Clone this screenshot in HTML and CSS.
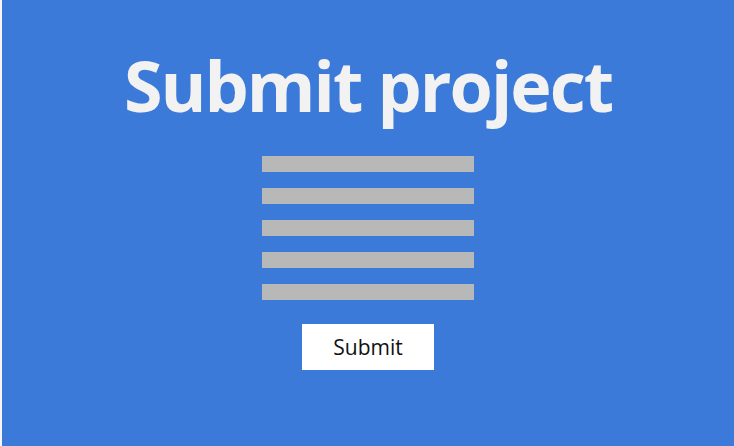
FILE: index.html
```html
<!DOCTYPE html>
<html>
<head>
<meta charset="utf-8">
<link rel="stylesheet" href="styles.css">
</head>
<body>
<main class="page">
  <h1 class="title">Submit project</h1>
  <div class="fields">
    <div class="field"></div>
    <div class="field"></div>
    <div class="field"></div>
    <div class="field"></div>
    <div class="field"></div>
  </div>
  <button class="submit" type="button">Submit</button>
</main>
</body>
</html>
```
FILE: styles.css
```css
html, body {
  margin: 0;
  padding: 0;
  background: #f4f6fb;
}
body {
  width: 734px;
  height: 446px;
  overflow: hidden;
}
.page {
  margin-left: 2px;
  height: 446px;
  background: #3c7ad9;
  display: flex;
  flex-direction: column;
  align-items: center;
  padding-top: 50px;
  box-sizing: border-box;
  font-family: "Open Sans", "Liberation Sans", sans-serif;
}
.title {
  margin: 0;
  font-size: 70px;
  line-height: 1;
  font-weight: 700;
  color: #f2f2f2;
  letter-spacing: -2px;
}
.fields {
  margin-top: 36px;
  display: flex;
  flex-direction: column;
  gap: 16px;
}
.field {
  width: 212px;
  height: 16px;
  background: #b8b8b8;
}
.submit {
  margin-top: 24px;
  width: 132px;
  height: 46px;
  border: none;
  background: #ffffff;
  color: #111;
  font-family: "Open Sans", "Liberation Sans", sans-serif;
  font-size: 21px;
  padding: 0;
  display: flex;
  align-items: center;
  justify-content: center;
}
```
